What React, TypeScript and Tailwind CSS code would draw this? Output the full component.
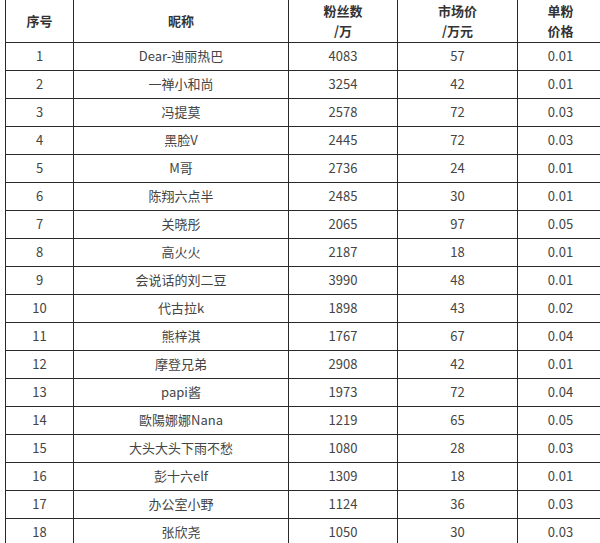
import React from "react";

const rows: [string, string, string, string, string][] = [
  ["1", "Dear-迪丽热巴", "4083", "57", "0.01"],
  ["2", "一禅小和尚", "3254", "42", "0.01"],
  ["3", "冯提莫", "2578", "72", "0.03"],
  ["4", "黑脸V", "2445", "72", "0.03"],
  ["5", "M哥", "2736", "24", "0.01"],
  ["6", "陈翔六点半", "2485", "30", "0.01"],
  ["7", "关晓彤", "2065", "97", "0.05"],
  ["8", "高火火", "2187", "18", "0.01"],
  ["9", "会说话的刘二豆", "3990", "48", "0.01"],
  ["10", "代古拉k", "1898", "43", "0.02"],
  ["11", "熊梓淇", "1767", "67", "0.04"],
  ["12", "摩登兄弟", "2908", "42", "0.01"],
  ["13", "papi酱", "1973", "72", "0.04"],
  ["14", "歐陽娜娜Nana", "1219", "65", "0.05"],
  ["15", "大头大头下雨不愁", "1080", "28", "0.03"],
  ["16", "彭十六elf", "1309", "18", "0.01"],
  ["17", "办公室小野", "1124", "36", "0.03"],
  ["18", "张欣尧", "1050", "30", "0.03"],
];

const widths = ["w-[68px]", "w-[215px]", "w-[109px]", "w-[120px]", "w-[86px]"];

export default function App() {
  return (
    <div
      className="w-[600px] h-[543px] overflow-hidden bg-white"
      style={{ fontFamily: '"Noto Sans CJK SC", "Noto Sans", sans-serif' }}
    >
      <div className="pl-[5px]">
        <table className="border-collapse table-fixed w-[598px] text-[13px] text-[#444]">
          <colgroup>
            {widths.map((w, i) => (
              <col key={i} className={w} />
            ))}
          </colgroup>
          <thead>
            <tr className="h-[42px]">
              {[
                ["序号"],
                ["昵称"],
                ["粉丝数", "/万"],
                ["市场价", "/万元"],
                ["单粉", "价格"],
              ].map((lines, i) => (
                <th
                  key={i}
                  className="border-x border-b-[1.5px] border-[#2a2a2a] border-x-[1.5px] font-bold text-[#333] text-center align-middle leading-[20px] p-0"
                >
                  {lines.map((l, j) => (
                    <div key={j}>{l}</div>
                  ))}
                </th>
              ))}
            </tr>
          </thead>
          <tbody>
            {rows.map((r, i) => (
              <tr key={i} className="h-[28px]">
                {r.map((c, j) => (
                  <td
                    key={j}
                    className="border-[1.5px] border-[#2a2a2a] text-center align-middle p-0 leading-[20px]"
                  >
                    {c}
                  </td>
                ))}
              </tr>
            ))}
          </tbody>
        </table>
      </div>
    </div>
  );
}
